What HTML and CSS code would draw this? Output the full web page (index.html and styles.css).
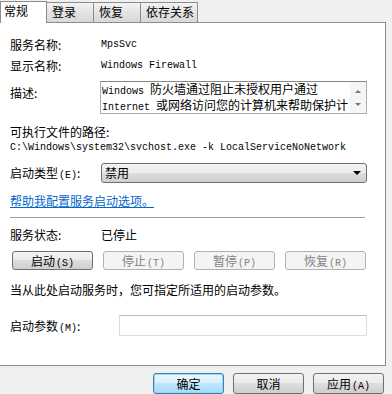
FILE: index.html
```html
<!DOCTYPE html>
<html lang="zh-CN">
<head>
    <meta charset="UTF-8">
    <meta name="viewport" content="width=device-width, initial-scale=1.0">
    <title>MpsSvc 属性</title>
    <link rel="stylesheet" href="styles.css">
</head>
<body>

    <div class="dialog">
        <div class="tabs">
            <div class="tab active">常规</div>
            <div class="tab">登录</div>
            <div class="tab">恢复</div>
            <div class="tab">依存关系</div>
        </div>

        <div class="panel">
            <div class="row first">
                <span class="label">服务名称:</span>
                <span class="mono">MpsSvc</span>
            </div>
            <div class="row second">
                <span class="label">显示名称:</span>
                <span class="mono">Windows Firewall</span>
            </div>
            <div class="row desc">
                <span class="label desc-label">描述:</span>
                <div class="textbox">
                    <div class="textbox-text">
                        <div><span class="mono">Windows </span>防火墙通过阻止未授权用户通过</div>
                        <div><span class="mono">Internet </span>或网络访问您的计算机来帮助保护计</div>
                    </div>
                    <div class="scrollbar">
                        <span class="arrow up"></span>
                        <span class="arrow down"></span>
                    </div>
                </div>
            </div>

            <div class="path-label">可执行文件的路径:</div>
            <div class="path mono">C:\Windows\system32\svchost.exe -k LocalServiceNoNetwork</div>

            <div class="row startup">
                <span class="label">启动类型<span class="key">(E)</span>:</span>
                <div class="select">
                    <span>禁用</span>
                    <span class="caret"></span>
                </div>
            </div>

            <a class="help" href="#">帮助我配置服务启动选项。</a>

            <div class="separator"></div>

            <div class="row status">
                <span class="label">服务状态:</span>
                <span>已停止</span>
            </div>

            <div class="actions">
                <button class="btn">启动<span class="key">(S)</span></button>
                <button class="btn" disabled>停止<span class="key">(T)</span></button>
                <button class="btn" disabled>暂停<span class="key">(P)</span></button>
                <button class="btn" disabled>恢复<span class="key">(R)</span></button>
            </div>

            <div class="hint">当从此处启动服务时，您可指定所适用的启动参数。</div>

            <div class="row params">
                <span class="label">启动参数<span class="key">(M)</span>:</span>
                <div class="input"></div>
            </div>
        </div>

        <div class="footer">
            <button class="btn default">确定</button>
            <button class="btn">取消</button>
            <button class="btn">应用<span class="key">(A)</span></button>
        </div>
    </div>

</body>
</html>
```

FILE: styles.css
```css
body {
    margin: 0;
    padding: 0;
    background-color: #f0f0f0;
    font-family: "Noto Sans CJK SC", "Liberation Sans", sans-serif;
    font-size: 12px;
    color: #000;
}
.dialog {
    width: 392px;
    height: 394px;
    overflow: hidden;
    display: flex;
    flex-direction: column;
}
.tabs {
    display: flex;
    align-items: flex-end;
    height: 22px;
}
.tab {
    box-sizing: border-box;
    height: 20px;
    width: 47px;
    padding-left: 5px;
    line-height: 18px;
    border: 1px solid #898c95;
    border-bottom: none;
    border-left: none;
    background: linear-gradient(#f3f3f3, #e3e3e3 50%, #d9d9d9);
}
.tab:nth-child(2) {
    border-left: 1px solid #898c95;
}
.tab:last-child {
    width: 57px;
}
.tab.active {
    height: 22px;
    width: 47px;
    padding-left: 3px;
    line-height: 18px;
    background: #fff;
    border-left: 1px solid #898c95;
    margin-bottom: -1px;
    position: relative;
    z-index: 1;
}
.tab.active + .tab {
    border-left: none;
}
.panel {
    box-sizing: border-box;
    width: 386px;
    height: 345px;
    background-color: #fff;
    border: 1px solid #898c95;
    border-left: none;
    padding-left: 10px;
}
.row {
    display: flex;
    align-items: center;
    height: 16px;
}
.label {
    width: 91px;
    flex-shrink: 0;
}
.mono {
    font-family: "Liberation Mono", monospace;
    font-size: 10px;
}
.key {
    font-family: "Liberation Mono", monospace;
    font-size: 10px;
    margin-left: 1px;
}
.first {
    margin-top: 14px;
}
.second {
    margin-top: 5px;
}
.desc {
    margin-top: 7px;
    height: 33px;
    align-items: flex-start;
}
.desc-label {
    padding-top: 3px;
}
.textbox {
    box-sizing: border-box;
    width: 267px;
    height: 33px;
    margin-left: -1px;
    border: 1px solid #abadb3;
    border-top-color: #888;
    display: flex;
}
.textbox-text {
    flex: 1;
    padding-left: 1px;
    line-height: 13px;
    white-space: nowrap;
}
.scrollbar {
    width: 16px;
    background-color: #f5f5f5;
    position: relative;
}
.arrow {
    position: absolute;
    left: 5px;
    width: 0;
    height: 0;
    border-left: 3px solid transparent;
    border-right: 3px solid transparent;
}
.arrow.up {
    top: 8px;
    border-bottom: 3px solid #777;
}
.arrow.down {
    top: 21px;
    border-top: 3px solid #777;
}
.path-label {
    margin-top: 10px;
    line-height: 16px;
}
.path {
    line-height: 15px;
}
.startup {
    margin-top: 8px;
    height: 20px;
}
.select {
    box-sizing: border-box;
    width: 266px;
    height: 20px;
    border: 1px solid #707070;
    border-radius: 3px;
    background: linear-gradient(#f2f2f2, #ebebeb 50%, #dddddd 50%, #cfcfcf);
    display: flex;
    align-items: center;
    justify-content: space-between;
    padding: 0 5px 0 3px;
}
.caret {
    width: 0;
    height: 0;
    border-left: 4px solid transparent;
    border-right: 4px solid transparent;
    border-top: 4px solid #000;
}
.help {
    display: inline-block;
    margin-top: 10px;
    line-height: 16px;
    color: #0066cc;
    text-decoration: underline;
}
.separator {
    width: 355px;
    height: 1px;
    margin-top: 8px;
    background-color: #a0a0a0;
}
.status {
    margin-top: 9px;
}
.actions {
    display: flex;
    gap: 10px;
    margin-top: 8px;
    padding-left: 2px;
}
.btn {
    box-sizing: border-box;
    width: 81px;
    height: 19px;
    padding: 0;
    font-family: "Noto Sans CJK SC", "Liberation Sans", sans-serif;
    font-size: 12px;
    line-height: 17px;
    color: #000;
    border: 1px solid #707070;
    border-radius: 3px;
    background: linear-gradient(#f2f2f2, #ebebeb 50%, #dddddd 50%, #cfcfcf);
}
.btn:disabled {
    color: #838383;
    border-color: #adb2b5;
    background: #f4f4f4;
}
.hint {
    margin-top: 12px;
    line-height: 16px;
}
.params {
    margin-top: 17px;
    height: 21px;
}
.params .label {
    width: 109px;
}
.input {
    box-sizing: border-box;
    width: 248px;
    height: 21px;
    border: 1px solid #dcdcdc;
    border-top-color: #bcbcbc;
    background-color: #fff;
}
.footer {
    display: flex;
    gap: 9px;
    padding: 7px 0 0 153px;
}
.footer .btn {
    width: 71px;
    height: 21px;
    line-height: 19px;
}
.footer .btn.default {
    border-color: #3c7fb1;
    background: linear-gradient(#eaf6fd, #d9f0fc 50%, #bee6fd 50%, #a7d9f5);
    box-shadow: inset 0 0 0 1px #9ad6f4;
}
```
